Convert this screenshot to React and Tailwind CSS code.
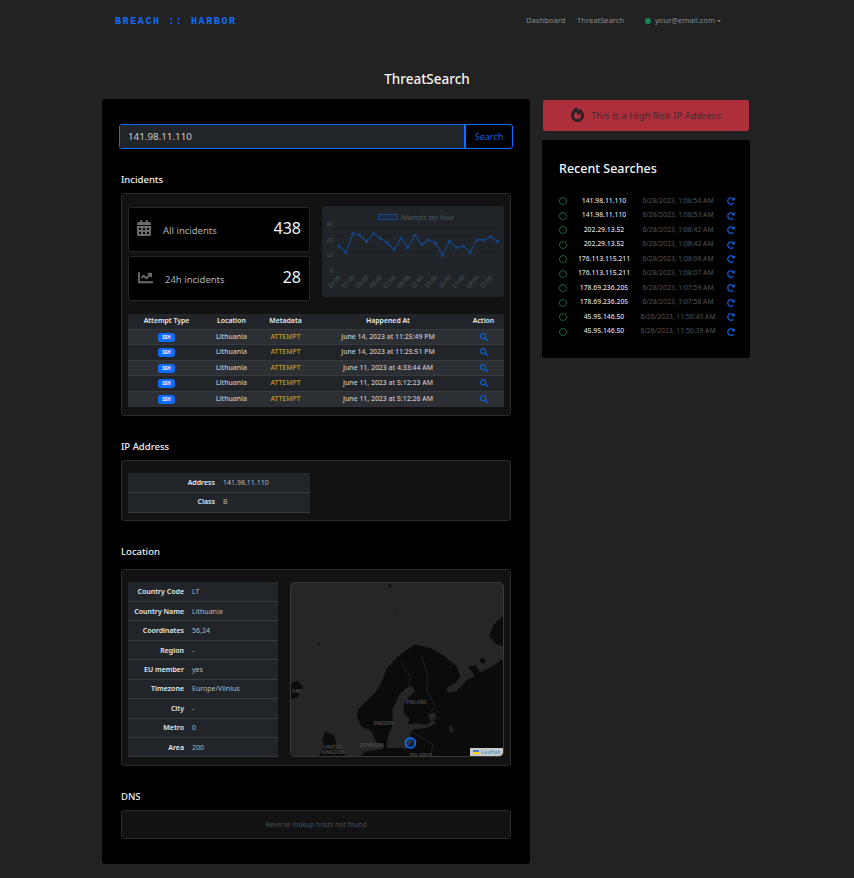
import { FaCalendarAlt, FaChartLine, FaFireAlt, FaRedoAlt, FaRegCircle, FaSearch } from "react-icons/fa";

const incidents = [
  ["June 14, 2023 at 11:25:49 PM", "bg-[#2c3034]"],
  ["June 14, 2023 at 11:25:51 PM", "bg-[#212529]"],
  ["June 11, 2023 at 4:33:44 AM", "bg-[#2c3034]"],
  ["June 11, 2023 at 5:12:23 AM", "bg-[#212529]"],
  ["June 11, 2023 at 5:12:26 AM", "bg-[#2c3034]"],
];

const searches = [
  ["141.98.11.110", "6/28/2023, 1:08:54 AM"],
  ["141.98.11.110", "6/28/2023, 1:08:53 AM"],
  ["202.29.13.52", "6/28/2023, 1:08:42 AM"],
  ["202.29.13.52", "6/28/2023, 1:08:42 AM"],
  ["176.113.115.211", "6/28/2023, 1:08:08 AM"],
  ["176.113.115.211", "6/28/2023, 1:08:07 AM"],
  ["178.69.236.205", "6/28/2023, 1:07:59 AM"],
  ["178.69.236.205", "6/28/2023, 1:07:58 AM"],
  ["45.95.146.50", "6/26/2023, 11:50:40 AM"],
  ["45.95.146.50", "6/26/2023, 11:50:39 AM"],
];

const locationRows = [
  ["Country Code", "LT"],
  ["Country Name", "Lithuania"],
  ["Coordinates", "56,24"],
  ["Region", "-"],
  ["EU member", "yes"],
  ["Timezone", "Europe/Vilnius"],
  ["City", "-"],
  ["Metro", "0"],
  ["Area", "200"],
];

const attempts = [16, 12, 24, 23, 19, 24, 21, 18, 14, 21, 15, 23, 17, 20, 18, 10, 19, 15, 16, 12, 20, 20, 22, 19];
const hours = ["23:00", "01:00", "03:00", "05:00", "07:00", "09:00", "11:00", "13:00", "15:00", "17:00", "19:00", "21:00"];

function Heading({ children }) {
  return <h3 className="text-[9.5px] leading-[13px] font-medium text-[#f0f0f0] pl-[2px]">{children}</h3>;
}

function Panel({ className, children }) {
  return <div className={`mx-[2px] bg-[#121212] border border-[#2a2c2e] rounded-[3px] ${className}`}>{children}</div>;
}

function StatCard({ icon, label, value, labelClass }) {
  return (
    <div className="h-[45px] bg-black border border-[#25282b] rounded-[2px] flex items-center pl-[8px] pr-[8px]">
      <span className="mb-[3px]">{icon}</span>
      <span className={`mt-[3px] text-[9.5px] text-[#a9b2ba] ${labelClass}`}>{label}</span>
      <span className="ml-auto mb-[3px] text-[16px] text-[#f2f6fa]">{value}</span>
    </div>
  );
}

function Chart() {
  const x = (i) => 24 + i * 6.9 - 7;
  const y = (v) => 65 - v * 1.556;
  const points = attempts.map((v, i) => `${x(i)},${y(v)}`).join(" ");
  return (
    <div className="ml-[12px] -mt-px w-[182px] h-[91px] bg-[#202428] rounded-[3px]">
      <svg width="182" height="91" viewBox="0 0 182 91">
        <rect x="56.500" y="8.500" width="19" height="5" fill="#192a42" stroke="#1c4a88" />
        <text x="79" y="14" fontSize="6.500" fill="#50565c" fontFamily="Liberation Sans">Attempts per Hour</text>
        {[0, 10, 20, 30].map((v) => (
          <g key={v}>
            <line x1="14" x2="178" y1={y(v)} y2={y(v)} stroke="#2a2e33" strokeWidth="0.500" />
            <text x="11" y={y(v) + 2} textAnchor="end" fontSize="6" fill="#50565c" fontFamily="Liberation Sans">{v}</text>
          </g>
        ))}
        {hours.map((h, i) => (
          <text key={h} x={x(i * 2) + 2} y="72" textAnchor="end" fontSize="6" fill="#50565c" fontFamily="Liberation Sans" transform={`rotate(-45 ${x(i * 2) + 2} 72)`}>{h}</text>
        ))}
        <polyline points={points} fill="none" stroke="#174380" strokeWidth="1.300" />
        {attempts.map((v, i) => (
          <circle key={i} cx={x(i)} cy={y(v)} r="1.700" fill="#174380" />
        ))}
      </svg>
    </div>
  );
}

function MapView() {
  return (
    <div className="relative ml-[12px] w-[214px] h-[175px] rounded-[5px] overflow-hidden border border-[#3a3a3a] bg-[#262626]">
      <svg width="214" height="175" viewBox="15 21 640 524">
        <path fill="#0b0b0b" d="M212 420L215 400L240 375L270 345L285 320L300 280L320 255L345 232L385 205L430 215L475 240L510 270L522 300L510 318L480 335L485 350L510 345L540 312L565 300L545 270L570 268L580 290L615 272L655 245V545H215L240 525L290 518L295 505L270 498L255 465L225 450Z" />
        <path fill="#262626" d="M378 328L385 345L365 365L352 385L352 410L370 430L365 445L385 440L420 445L440 432L450 440L420 455L385 460L370 470L378 495L358 520L345 515L300 515L305 480L320 445L318 400L340 355L360 335Z" />
        <path fill="#262626" d="M425 415L445 408L450 425L432 436Z" />
        <path fill="#262626" d="M488 452L496 448L500 466L491 470Z" />
        <path fill="#0b0b0b" d="M118 465L145 478L150 505L172 525L178 545H95L115 510L108 490Z" />
        <path fill="#0b0b0b" d="M15 322L35 312L52 335L35 362L15 368Z" />
        <path fill="#0b0b0b" d="M608 180L622 145L650 120L655 85V212L630 205Z" />
        <path fill="#0b0b0b" d="M580 250L592 245L598 260L585 262Z" />
        <path fill="#0b0b0b" d="M305 26L313 24L314 33L308 34Z" />
        <path fill="#0b0b0b" d="M328 103L334 104L331 109Z" />
        <path fill="#0b0b0b" d="M92 205L101 200L99 208Z" />
        <path fill="none" stroke="#2e2e2e" strokeWidth="2" d="M345 250L350 270L372 300L368 328M405 235L425 300L420 340L445 390L430 410M372 470L400 480L440 505L430 545" />
        <g fontSize="14" fontWeight="700" fill="#4a4a4a" textAnchor="middle" fontFamily="Liberation Sans">
          <text x="390" y="382">FINLAND</text>
          <text x="292" y="446">SWEDEN</text>
          <text x="256" y="511">DENMARK</text>
          <text x="141" y="517">UNITED</text>
          <text x="141" y="533">KINGDOM</text>
          <text x="404" y="543">BELARUS</text>
          <text x="33" y="349">AND</text>
        </g>
        <circle cx="372" cy="500" r="15" fill="#0d6efd" fillOpacity="0.200" stroke="#0d6efd" strokeWidth="5" />
      </svg>
      <div className="absolute right-0 bottom-0 h-[8px] flex items-center gap-[2px] px-[3px] bg-[#c9c9c9] text-[6px] leading-none text-[#3c8fc4]">
        <span className="flex flex-col w-[6px]">
          <span className="h-[2px] bg-[#4C7BE1]" />
          <span className="h-[2px] bg-[#FFD500]" />
        </span>
        Leaflet
      </div>
    </div>
  );
}

export default function App() {
  return (
    <div className="min-h-[878px] bg-[#222222] font-['Noto_Sans',sans-serif] text-[#dee2e6]">
      <nav className="h-[42px] flex items-center pl-[115px] text-[7.6px]">
        <span className="font-['Liberation_Mono',monospace] font-bold text-[10px] tracking-[1.6px] text-[#0d6efd] w-[411px] whitespace-nowrap">BREACH :: HARBOR</span>
        <span className="text-[#8a8a8a] w-[51px]">Dashboard</span>
        <span className="text-[#8a8a8a] w-[68px]">ThreatSearch</span>
        <span className="w-[6px] h-[6px] rounded-full bg-[#198754] mr-[4px]" />
        <span className="text-[#8a8a8a]">your@email.com</span>
        <span className="ml-[2px] border-x-[2.500px] border-t-[2.500px] border-x-transparent border-t-[#8a8a8a]" />
      </nav>

      <h1 className="h-[57px] pt-[26px] text-center text-[13.500px] leading-[22px] font-medium text-[#f5f5f5]">ThreatSearch</h1>

      <div className="flex items-start pl-[102px]">
        <main className="w-[428px] h-[765px] bg-black rounded-[3px] px-[17px] pt-[25px]">
          <div className="flex h-[25px] border border-[#0d6efd] rounded-[3px] overflow-hidden">
            <div className="flex-1 bg-[#212529] pl-[8px] text-[9.800px] leading-[23px] text-[#c9cdd1]">141.98.11.110</div>
            <button className="w-[48px] border-l-2 border-[#0d6efd] text-[9px] text-[#0d5fd8]">Search</button>
          </div>

          <div className="mt-[24px]">
            <Heading>Incidents</Heading>
            <Panel className="mt-[7px] h-[223px] px-[6px] pt-[13px]">
              <div className="flex">
                <div className="w-[182px] flex flex-col gap-[4px]">
                  <StatCard icon={<FaCalendarAlt className="w-[14px] h-[16px] text-[#6b6b6b]" />} label="All incidents" value="438" labelClass="ml-[12px]" />
                  <StatCard icon={<FaChartLine className="w-[17px] h-[15px] text-[#6b6b6b]" />} label="24h incidents" value="28" labelClass="ml-[11px]" />
                </div>
                <Chart />
              </div>
              <table className="mt-[13px] w-[376px] table-fixed text-[6.900px] leading-[10px] text-center font-medium">
                <thead>
                  <tr className="h-[15px] bg-[#212529] text-[#e6eaee]">
                    <th className="w-[77px] font-semibold">Attempt Type</th>
                    <th className="w-[53px] font-semibold">Location</th>
                    <th className="w-[55px] font-semibold">Metadata</th>
                    <th className="w-[150px] font-semibold">Happened At</th>
                    <th className="w-[41px] font-semibold">Action</th>
                  </tr>
                </thead>
                <tbody>
                  {incidents.map(([when, bg]) => (
                    <tr key={when} className={`h-[15.500px] border-t border-[#373b3e] ${bg}`}>
                      <td>
                        <span className="inline-block w-[17px] h-[9px] rounded-[3px] bg-[#0d6efd] text-white text-[4.500px] leading-[9px] font-bold">SSH</span>
                      </td>
                      <td className="text-[#c5c9cd]">Lithuania</td>
                      <td className="text-[#c2991f]">ATTEMPT</td>
                      <td className="text-[#c5c9cd]">{when}</td>
                      <td><FaSearch className="inline-block w-[8px] h-[8px] text-[#0d5fd8]" /></td>
                    </tr>
                  ))}
                </tbody>
              </table>
            </Panel>
          </div>

          <div className="mt-[24px]">
            <Heading>IP Address</Heading>
            <Panel className="mt-[7px] h-[61px] px-[6px] pt-[12px]">
              <table className="w-[182px] table-fixed text-[7px] leading-[10px] bg-[#212529]">
                <tbody>
                  <tr className="h-[19px] border-b border-[#373b3e]">
                    <th className="w-[87px] pt-px text-right font-semibold text-[#e6eaee]">Address</th>
                    <td className="pl-[8px] pt-px text-[#b5b9bd]">141.98.11.110</td>
                  </tr>
                  <tr className="h-[20px] border-b border-[#373b3e]">
                    <th className="text-right font-semibold text-[#e6eaee]">Class</th>
                    <td className="pl-[8px] text-[#b5b9bd]">B</td>
                  </tr>
                </tbody>
              </table>
            </Panel>
          </div>

          <div className="mt-[24px]">
            <Heading>Location</Heading>
            <Panel className="mt-[11px] h-[197px] px-[6px] pt-[12px] flex items-start">
              <table className="w-[150px] table-fixed text-[7px] leading-[10px] bg-[#212529]">
                <tbody>
                  {locationRows.map(([k, v]) => (
                    <tr key={k} className="h-[19.440px] border-b border-[#373b3e]">
                      <th className="w-[56px] pt-px text-right font-semibold text-[#e6eaee] whitespace-nowrap">{k}</th>
                      <td className="pl-[8px] pt-px text-[#b5b9bd]">{v}</td>
                    </tr>
                  ))}
                </tbody>
              </table>
              <MapView />
            </Panel>
          </div>

          <div className="mt-[24px]">
            <Heading>DNS</Heading>
            <Panel className="mt-[7px] h-[29px] pt-px flex items-center justify-center text-[6.800px] text-[#4a5159]">
              Reverse lookup hosts not found
            </Panel>
          </div>
        </main>

        <aside className="ml-[12px] w-[208px]">
          <div className="mx-[1px] h-[31px] bg-[#ac2f3b] rounded-[2px] flex items-center justify-center gap-[7px] text-[9.500px] text-[#3d2a30] mt-[1px]">
            <FaFireAlt className="w-[13px] h-[15px] mb-[2px] text-[#2a2226]" />
            <span className="mt-[2px]">This is a High Risk IP Address</span>
          </div>
          <div className="mt-[9px] h-[218px] bg-black rounded-[3px] pl-[17px] pr-[15px] pt-[20px]">
            <h2 className="text-[12.500px] leading-[18px] font-medium text-[#f2f6fa]">Recent Searches</h2>
            <div className="mt-[16px]">
              {searches.map(([ip, when], i) => (
                <div key={i} className="h-[14.500px] flex items-center text-[6.800px] leading-none">
                  <FaRegCircle className="w-[8px] h-[8px] text-[#1a7a4c] shrink-0" />
                  <span className="w-[72px] ml-[1px] text-center text-[#d9dde1] font-medium whitespace-nowrap">{ip}</span>
                  <span className="w-[76px] text-center text-[#50565c] whitespace-nowrap">{when}</span>
                  <FaRedoAlt className="ml-[11px] w-[8px] h-[8px] text-[#0d5fd8] shrink-0" />
                </div>
              ))}
            </div>
          </div>
        </aside>
      </div>
    </div>
  );
}
